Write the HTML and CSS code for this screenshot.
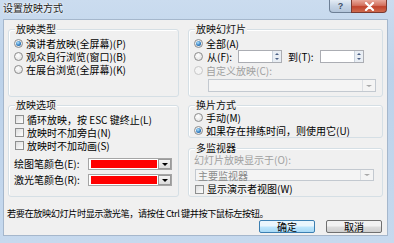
FILE: index.html
```html
<!DOCTYPE html>
<html lang="zh-CN">
<head>
    <meta charset="UTF-8">
    <title>设置放映方式</title>
    <link rel="stylesheet" href="styles.css">
</head>
<body>
<div class="window">
    <div class="titlebar">
        <span class="title">设置放映方式</span>
        <div class="caption-buttons">
            <span class="cap-btn help">?</span>
            <span class="cap-btn close">
                <svg width="11" height="9" viewBox="0 0 11 9"><path d="M2 1 L9 8 M9 1 L2 8" stroke="#fff" stroke-width="2.2" stroke-linecap="round"/></svg>
            </span>
        </div>
    </div>
    <div class="client">
        <div class="groups">
            <div class="group">
                <div class="group-title">放映类型</div>
                <div class="rows">
                    <div class="row"><span class="radio on"></span>演讲者放映(全屏幕)(P)</div>
                    <div class="row"><span class="radio"></span>观众自行浏览(窗口)(B)</div>
                    <div class="row"><span class="radio"></span>在展台浏览(全屏幕)(K)</div>
                </div>
            </div>

            <div class="group">
                <div class="group-title">放映幻灯片</div>
                <div class="rows">
                    <div class="row"><span class="radio on"></span>全部(A)</div>
                    <div class="row">
                        <span class="radio"></span><span class="range-label">从(F):</span>
                        <span class="spin"><span class="spin-field"></span><span class="spin-arrows"><i class="up"></i><i class="down"></i></span></span>
                        <span class="range-label to">到(T):</span>
                        <span class="spin"><span class="spin-field"></span><span class="spin-arrows"><i class="up"></i><i class="down"></i></span></span>
                    </div>
                    <div class="row disabled custom"><span class="radio"></span>自定义放映(C):</div>
                    <div class="combo custom-combo"><span class="combo-text"></span><span class="combo-arrow"></span></div>
                </div>
            </div>

            <div class="group">
                <div class="group-title">放映选项</div>
                <div class="rows">
                    <div class="row"><span class="check"></span>循环放映，按 ESC 键终止(L)</div>
                    <div class="row"><span class="check"></span>放映时不加旁白(N)</div>
                    <div class="row"><span class="check"></span>放映时不加动画(S)</div>
                    <div class="color-row first">
                        <span class="color-label">绘图笔颜色(E):</span>
                        <span class="color-pick"><span class="swatch"></span><span class="pick-arrow"></span></span>
                    </div>
                    <div class="color-row">
                        <span class="color-label">激光笔颜色(R):</span>
                        <span class="color-pick"><span class="swatch"></span><span class="pick-arrow"></span></span>
                    </div>
                </div>
            </div>

            <div class="right-stack">
                <div class="group advance">
                    <div class="group-title">换片方式</div>
                    <div class="rows tight">
                        <div class="row"><span class="radio"></span>手动(M)</div>
                        <div class="row"><span class="radio on"></span>如果存在排练时间，则使用它(U)</div>
                    </div>
                </div>
                <div class="group monitors">
                    <div class="group-title">多监视器</div>
                    <div class="rows tight">
                        <div class="row small disabled">幻灯片放映显示于(O):</div>
                        <div class="combo monitor-combo"><span class="combo-text">主要监视器</span><span class="combo-arrow"></span></div>
                        <div class="row small presenter"><span class="check"></span>显示演示者视图(W)</div>
                    </div>
                </div>
            </div>
        </div>

        <p class="hint">若要在放映幻灯片时显示激光笔，请按住 Ctrl 键并按下鼠标左按钮。</p>
        <div class="actions">
            <button class="btn default">确定</button>
            <button class="btn">取消</button>
        </div>
    </div>
</div>
</body>
</html>
```
FILE: styles.css
```css
body {
    margin: 0;
    font-family: "Noto Sans CJK SC", "Liberation Sans", sans-serif;
    font-size: 10px;
    line-height: 12px;
    color: #000;
    background: #c3d7ec;
}
.window {
    width: 394px;
    height: 243px;
    background: linear-gradient(#cbdcef, #bcd2ea 30%, #c6d9ee);
    overflow: hidden;
}
.titlebar {
    height: 19px;
    display: flex;
    justify-content: space-between;
    align-items: flex-start;
}
.title {
    padding: 2px 0 0 3px;
    line-height: 12px;
    font-size: 10px;
    color: #1b1b1b;
    text-shadow: 0 0 3px #fff, 0 0 2px #fff;
}
.caption-buttons {
    display: flex;
    margin-right: 7px;
}
.cap-btn {
    height: 13px;
    display: flex;
    align-items: center;
    justify-content: center;
    box-sizing: border-box;
    border: 1px solid #6d7f95;
    border-top: none;
}
.help {
    width: 22px;
    border-radius: 0 0 0 4px;
    border-right: none;
    background: linear-gradient(#e4ecf5, #c5d4e5 50%, #b3c5da);
    color: #3c4e66;
    font-family: "Liberation Sans", sans-serif;
    font-weight: bold;
    font-size: 9px;
    line-height: 12px;
}
.close {
    width: 36px;
    border-radius: 0 0 4px 0;
    border-color: #7b3a31;
    background: linear-gradient(#e9a99c, #d3725f 45%, #c1432c 55%, #cf6a4e);
}
.client {
    margin-left: 3px;
    width: 385px;
    height: 217px;
    box-sizing: border-box;
    border: 1px solid #a5b7cc;
    background: #f0f0f0;
    padding: 9px 4px 0 4px;
}
.groups {
    display: grid;
    grid-template-columns: 171px 195px;
    grid-template-rows: 68px 92px;
    column-gap: 9px;
    row-gap: 8px;
}
.group {
    border: 1px solid #d5dfe5;
    border-radius: 3px;
    box-shadow: inset 1px 1px 0 #fff;
    padding: 0 5px;
}
.group-title {
    margin: -7px 0 0 1px;
    padding: 0 1px;
    width: fit-content;
    line-height: 12px;
    background: #f0f0f0;
    color: #111;
}
.rows {
    margin-top: 2px;
    display: flex;
    flex-direction: column;
}
.rows.tight {
    margin-top: 0;
}
.row {
    height: 13px;
    display: flex;
    align-items: center;
    gap: 3px;
    white-space: nowrap;
}
.row.small {
    height: 12px;
}
.disabled {
    color: #a0a0a0;
}
.radio {
    position: relative;
    flex: none;
    width: 9px;
    height: 9px;
    box-sizing: border-box;
    border-radius: 50%;
    border: 1px solid #8c8c8c;
    background: radial-gradient(circle at 40% 35%, #fff, #dadada);
}
.radio.on::after {
    content: "";
    position: absolute;
    inset: 1px;
    border-radius: 50%;
    background: radial-gradient(circle at 40% 35%, #b5e4fb, #2a78c0 60%, #1a4f86);
}
.disabled .radio {
    border-color: #c6c6c6;
    background: #f4f4f4;
}
.check {
    flex: none;
    width: 9px;
    height: 9px;
    margin-left: 1px;
    box-sizing: border-box;
    border: 1px solid #8e8f8f;
    background: linear-gradient(135deg, #dcdcdc, #fff);
}
.range-label {
    margin: 0 3px 0 1px;
}
.range-label.to {
    margin-left: 3px;
}
.spin {
    display: flex;
    width: 44px;
    height: 13px;
    box-sizing: border-box;
    border: 1px solid #abadb3;
    background: #fff;
}
.spin-field {
    flex: 1;
}
.spin-arrows {
    width: 8px;
    display: flex;
    flex-direction: column;
    background: #e9eef4;
    border-left: 1px solid #c9d2dc;
}
.spin-arrows i {
    flex: 1;
    display: flex;
    align-items: center;
    justify-content: center;
}
.spin-arrows i::before {
    content: "";
    border-left: 2px solid transparent;
    border-right: 2px solid transparent;
}
.spin-arrows .up::before {
    border-bottom: 2px solid #4d6185;
}
.spin-arrows .down::before {
    border-top: 2px solid #4d6185;
}
.custom {
    margin-top: 1px;
}
.combo {
    display: flex;
    box-sizing: border-box;
    border: 1px solid #c3c9d0;
    background: #f4f4f4;
    color: #8a8a8a;
}
.combo-text {
    flex: 1;
    line-height: 11px;
    padding-left: 2px;
}
.combo-arrow {
    width: 12px;
    display: flex;
    align-items: center;
    justify-content: center;
    border-left: 1px solid #dcdfe3;
}
.combo-arrow::before {
    content: "";
    border-left: 3px solid transparent;
    border-right: 3px solid transparent;
    border-top: 2px solid #a8a8a8;
}
.custom-combo {
    margin: 2px 0 0 14px;
    width: 168px;
    height: 13px;
}
.monitor-combo {
    margin: 3px 0 0 1px;
    width: 179px;
    height: 12px;
}
.presenter {
    margin-top: 2px;
}
.color-row {
    display: flex;
    align-items: center;
    height: 12px;
    margin-top: 4px;
}
.color-row.first {
    margin-top: 6px;
}
.color-label {
    width: 74px;
}
.color-pick {
    display: flex;
    width: 84px;
    height: 12px;
    box-sizing: border-box;
    border: 1px solid #a5a5a5;
    background: #fff;
    padding: 1px 1px 1px 2px;
    gap: 1px;
}
.swatch {
    flex: 1;
    background: #ff0000;
}
.pick-arrow {
    width: 13px;
    display: flex;
    align-items: center;
    justify-content: center;
    box-sizing: border-box;
    border: 1px solid #9a9a9a;
    background: linear-gradient(#f4f4f4, #dcdcdc);
    margin: -1px -1px -1px 0;
}
.pick-arrow::before {
    content: "";
    border-left: 3px solid transparent;
    border-right: 3px solid transparent;
    border-top: 3px solid #000;
}
.right-stack {
    display: flex;
    flex-direction: column;
    gap: 10px;
}
.advance {
    height: 33px;
    box-sizing: border-box;
}
.monitors {
    height: 49px;
    box-sizing: border-box;
}
.hint {
    margin: 10px 0 0 -1px;
    font-size: 9.2px;
    letter-spacing: -0.45px;
    line-height: 12px;
    white-space: nowrap;
}
.actions {
    display: flex;
    justify-content: flex-end;
    gap: 11px;
    margin: 1px 1px 0 0;
}
.btn {
    width: 56px;
    height: 13px;
    padding: 0;
    font-family: inherit;
    font-size: 10px;
    line-height: 11px;
    color: #000;
    border: 1px solid #707070;
    border-radius: 2px;
    background: linear-gradient(#f2f2f2 45%, #dcdcdc 55%, #cfcfcf);
}
.btn.default {
    border-color: #3c7fb1;
    background: linear-gradient(#eaf6fd 45%, #bee6fd 55%, #a7d9f5);
}
```
